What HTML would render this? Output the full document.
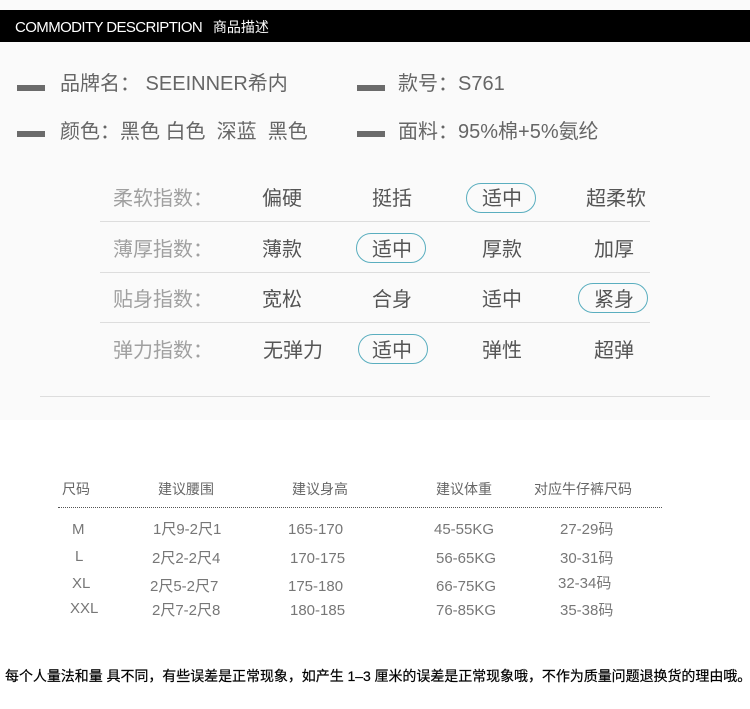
<!DOCTYPE html>
<html><head><meta charset="utf-8"><style>
*{margin:0;padding:0;box-sizing:border-box}
body{width:750px;height:709px;background:#fff;position:relative;overflow:hidden;font-family:"Liberation Sans","Noto Sans CJK SC",sans-serif}
.a{position:absolute;white-space:nowrap}
.top{position:absolute;left:0;top:0;width:750px;height:420px;background:#fafafa}
.bar{position:absolute;left:0;top:10px;width:750px;height:32px;background:#000}
.dash{position:absolute;width:28px;height:6px;background:#6b6b6b}
.t1{font-size:20px;color:#666;line-height:24px}
.lab{font-size:20px;color:#a0a0a0;line-height:26px}
.v{font-size:20px;color:#555;line-height:26px;text-align:center;width:90px}
.ov{position:absolute;width:70px;height:30px;border:1.5px solid #5aaebf;border-radius:15px}
.ln{position:absolute;height:1px;background:#ddd}
.h{font-size:14px;color:#666;line-height:18px}
.c{font-size:15px;color:#777;line-height:18px}
</style></head><body>
<div class="top"></div>
<div class="bar"></div>
<div class="a" style="left:15px;top:17px;color:#fff;font-size:15px;letter-spacing:-0.6px">COMMODITY DESCRIPTION&nbsp;&nbsp; <span style="font-size:14px;letter-spacing:0">商品描述</span></div>

<div class="dash" style="left:17px;top:85px"></div>
<div class="a t1" style="left:60px;top:72px">品牌名：&nbsp;SEEINNER希内</div>
<div class="dash" style="left:357px;top:85px"></div>
<div class="a t1" style="left:398px;top:72px">款号：S761</div>
<div class="dash" style="left:17px;top:131px"></div>
<div class="a t1" style="left:60px;top:120px">颜色：黑色 白色&nbsp; 深蓝&nbsp; 黑色</div>
<div class="dash" style="left:357px;top:131px"></div>
<div class="a t1" style="left:398px;top:120px">面料：95%棉+5%氨纶</div>

<div class="a lab" style="left:113px;top:186px">柔软指数：</div>
<div class="a v" style="left:237px;top:186px">偏硬</div>
<div class="a v" style="left:347px;top:186px">挺括</div>
<div class="a v" style="left:457px;top:186px">适中</div>
<div class="a v" style="left:571px;top:186px">超柔软</div>
<div class="ov" style="left:466px;top:183px"></div>
<div class="ln" style="left:100px;top:221px;width:550px"></div>

<div class="a lab" style="left:113px;top:237px">薄厚指数：</div>
<div class="a v" style="left:237px;top:237px">薄款</div>
<div class="a v" style="left:347px;top:237px">适中</div>
<div class="a v" style="left:457px;top:237px">厚款</div>
<div class="a v" style="left:569px;top:237px">加厚</div>
<div class="ov" style="left:356px;top:233px"></div>
<div class="ln" style="left:100px;top:272px;width:550px"></div>

<div class="a lab" style="left:113px;top:287px">贴身指数：</div>
<div class="a v" style="left:237px;top:287px">宽松</div>
<div class="a v" style="left:347px;top:287px">合身</div>
<div class="a v" style="left:457px;top:287px">适中</div>
<div class="a v" style="left:569px;top:287px">紧身</div>
<div class="ov" style="left:578px;top:283px"></div>
<div class="ln" style="left:100px;top:322px;width:550px"></div>

<div class="a lab" style="left:113px;top:338px">弹力指数：</div>
<div class="a v" style="left:248px;top:338px">无弹力</div>
<div class="a v" style="left:347px;top:338px">适中</div>
<div class="a v" style="left:457px;top:338px">弹性</div>
<div class="a v" style="left:569px;top:338px">超弹</div>
<div class="ov" style="left:358px;top:334px"></div>
<div class="ln" style="left:40px;top:396px;width:670px"></div>

<div class="a h" style="left:62px;top:480px">尺码</div>
<div class="a h" style="left:158px;top:480px">建议腰围</div>
<div class="a h" style="left:292px;top:480px">建议身高</div>
<div class="a h" style="left:436px;top:480px">建议体重</div>
<div class="a h" style="left:534px;top:480px">对应牛仔裤尺码</div>
<div style="position:absolute;left:58px;top:507px;width:604px;border-top:1px dotted #555"></div>

<div class="a c" style="left:72px;top:521px">M</div>
<div class="a c" style="left:153px;top:521px">1尺9-2尺1</div>
<div class="a c" style="left:288px;top:521px">165-170</div>
<div class="a c" style="left:434px;top:521px">45-55KG</div>
<div class="a c" style="left:560px;top:521px">27-29码</div>

<div class="a c" style="left:75px;top:548px">L</div>
<div class="a c" style="left:152px;top:550px">2尺2-2尺4</div>
<div class="a c" style="left:290px;top:550px">170-175</div>
<div class="a c" style="left:436px;top:550px">56-65KG</div>
<div class="a c" style="left:560px;top:550px">30-31码</div>

<div class="a c" style="left:72px;top:575px">XL</div>
<div class="a c" style="left:150px;top:578px">2尺5-2尺7</div>
<div class="a c" style="left:288px;top:578px">175-180</div>
<div class="a c" style="left:436px;top:578px">66-75KG</div>
<div class="a c" style="left:558px;top:575px">32-34码</div>

<div class="a c" style="left:70px;top:600px">XXL</div>
<div class="a c" style="left:152px;top:602px">2尺7-2尺8</div>
<div class="a c" style="left:290px;top:602px">180-185</div>
<div class="a c" style="left:436px;top:602px">76-85KG</div>
<div class="a c" style="left:560px;top:602px">35-38码</div>

<div class="a" style="left:5px;top:667px;font-size:14px;color:#000;line-height:18px;letter-spacing:-0.05px;-webkit-text-stroke:0.2px #000">每个人量法和量 具不同，有些误差是正常现象，如产生 1–3 厘米的误差是正常现象哦，不作为质量问题退换货的理由哦。</div>
</body></html>
